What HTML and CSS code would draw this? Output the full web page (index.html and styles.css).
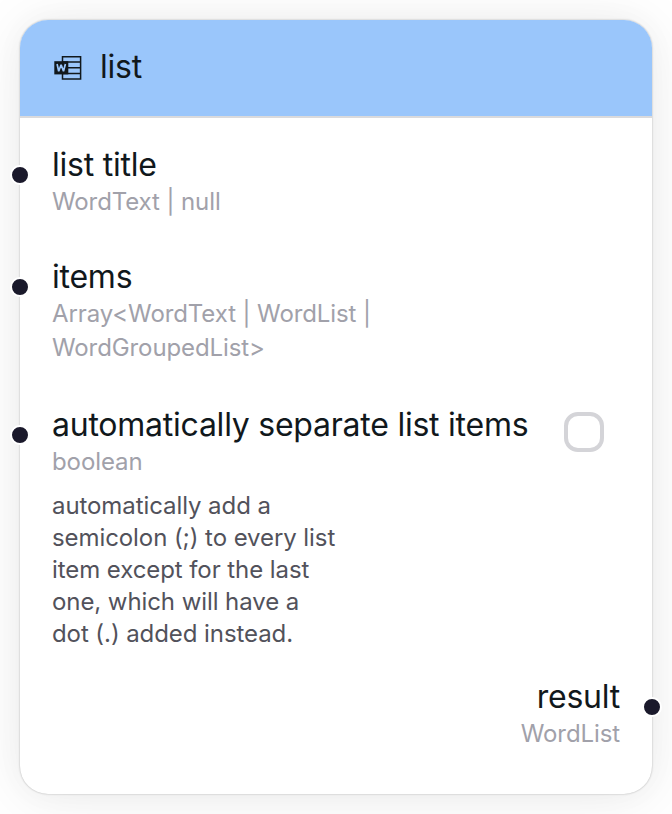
FILE: index.html
```
<!DOCTYPE html>
<html lang="en">
<head>
<meta charset="utf-8">
<title>list</title>
<link rel="stylesheet" href="styles.css">
</head>
<body>
<article class="node">
  <header class="node-header">
    <svg class="node-icon" viewBox="0 0 32 32" aria-hidden="true">
      <path d="M10.5 4.7h18.1v22.3H10.5zM10.5 10.1h18M10.5 15.8h18M10.5 21.4h18" fill="none" stroke="#11181c" stroke-width="1.5"/>
      <path d="M2.3 9.2h14v13.2h-14z" fill="#11181c"/>
      <path d="M5.1 12l1.6 7.2 2.4-6.4 2.4 6.4 1.9-7.2" fill="none" stroke="#9ac6fb" stroke-width="1.7" stroke-linejoin="bevel"/>
    </svg>
    <h1 class="node-title">list</h1>
  </header>
  <main class="node-body">
    <section class="port">
      <i class="handle handle-in"></i>
      <h2 class="port-name">list title</h2>
      <p class="port-type">WordText | null</p>
    </section>
    <section class="port">
      <i class="handle handle-in"></i>
      <h2 class="port-name">items</h2>
      <p class="port-type">Array&lt;WordText | WordList |<br>WordGroupedList&gt;</p>
    </section>
    <section class="port port-separate">
      <i class="handle handle-in"></i>
      <div class="port-info">
        <h2 class="port-name">automatically separate list items</h2>
        <p class="port-type">boolean</p>
        <p class="port-description">automatically add a semicolon (;) to every list item except for the last one, which will have a dot (.) added instead.</p>
      </div>
      <span class="checkbox" role="checkbox" aria-checked="false"></span>
    </section>
    <section class="port port-result">
      <i class="handle handle-out"></i>
      <h2 class="port-name">result</h2>
      <p class="port-type">WordList</p>
    </section>
  </main>
</article>
</body>
</html>
```
FILE: styles.css
```
* { box-sizing: border-box; }
body {
  margin: 0;
  padding: 20px;
  height: 814px;
  overflow: hidden;
  background: #fff;
  color: #11181c;
  font-family: Inter, sans-serif;
}
h1, h2, p { margin: 0; font-weight: 400; }
.node {
  width: 632px;
  height: 774px;
  border-radius: 28px;
  background: #fff;
  box-shadow: 0 0 30px rgb(0 0 0 / 3%), 0 4px 60px rgb(0 0 0 / 8%), 0 0 2px rgb(0 0 0 / 30%);
}
.node-header {
  display: flex;
  align-items: center;
  gap: 16px;
  height: 98px;
  padding: 0 32px;
  border-bottom: 2px solid #dadadc;
  border-radius: 28px 28px 0 0;
  background: #9ac6fb;
  background-clip: padding-box;
}
.node-icon { width: 32px; height: 32px; }
.node-title, .port-name {
  font-size: 32px;
  line-height: 40px;
  letter-spacing: -0.24px;
}
.node-title { padding-bottom: 2px; }
.node-body { padding: 27px 32px 0; }
.port { position: relative; margin-bottom: 38px; }
.port:nth-child(2) { margin-bottom: 40px; }
.port-type {
  color: #a1a1aa;
  font-size: 24px;
  line-height: 34px;
  letter-spacing: -0.1px;
}
.port-separate { display: flex; gap: 36px; }
.port-description {
  width: 288px;
  margin-top: 11px;
  color: #52525b;
  font-size: 24px;
  line-height: 32px;
  letter-spacing: -0.08px;
}
.checkbox {
  width: 40px;
  height: 40px;
  margin-top: 7px;
  border: 4px solid #d4d4d8;
  border-radius: 14px;
}
.port-separate { margin-bottom: 27px; }
.port-result { margin-bottom: 0; text-align: right; }
.handle {
  position: absolute;
  top: 20px;
  width: 20px;
  height: 20px;
  border: 2px solid #fff;
  border-radius: 50%;
  background: #1a192b;
}
.handle-in { left: -42px; }
.handle-out { right: -42px; }
```
